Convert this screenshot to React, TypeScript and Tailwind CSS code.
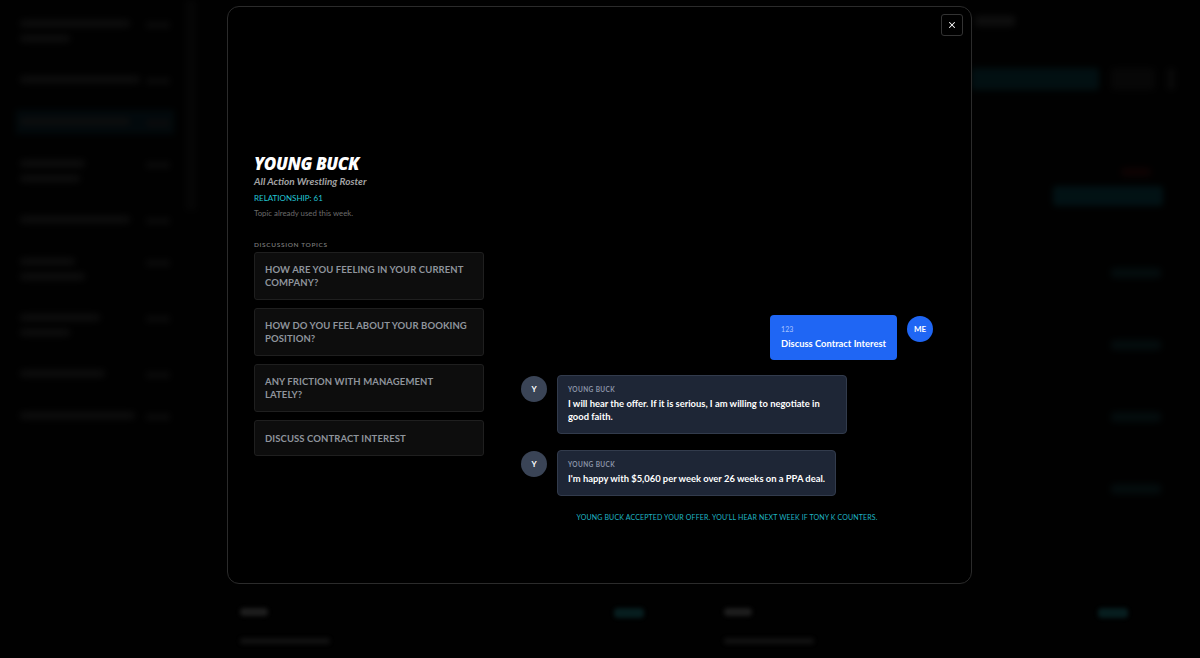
import React from 'react';
import { X } from 'lucide-react';

const SIDEBAR_ROWS = [
  { w: [110, 50], active: false },
  { w: [120], active: false },
  { w: [110], active: true },
  { w: [65, 60], active: false },
  { w: [110], active: false },
  { w: [55, 65], active: false },
  { w: [80, 50], active: false },
  { w: [85], active: false },
  { w: [115], active: false },
];

const TOPICS = [
  'How are you feeling in your current company?',
  'How do you feel about your booking position?',
  'Any friction with management lately?',
  'Discuss contract interest',
];

const Backdrop: React.FC = () => (
  <div className="absolute inset-0 flex blur-[3px] opacity-70">
    {/* sidebar */}
    <div className="w-[186px] shrink-0 flex flex-col pt-3 pl-4 pr-3 gap-[18px]">
      {SIDEBAR_ROWS.map((r, i) => (
        <div
          key={i}
          className={`flex justify-between items-start py-2 px-1 ${r.active ? 'bg-[#061a22]' : ''}`}
        >
          <div className="flex flex-col gap-2">
            {r.w.map((w, j) => (
              <div key={j} className="h-[7px] bg-[#262626] rounded" style={{ width: w }} />
            ))}
          </div>
          <div className="w-6 h-[6px] bg-[#202020] rounded mt-0.5" />
        </div>
      ))}
    </div>
    <div className="w-[10px] bg-[#111] h-[210px]" />
    {/* main */}
    <div className="flex-1 flex flex-col pl-[775px] pr-6 pt-4">
      <div className="h-[10px] w-[40px] bg-[#2a2a2a] rounded ml-1" />
      <div className="flex gap-3 mt-[42px] items-center">
        <div className="h-[22px] w-[128px] bg-[#062d33] rounded" />
        <div className="h-[22px] w-[44px] bg-[#141414] rounded" />
        <div className="h-[22px] w-[8px] bg-[#1a1a1a] rounded" />
      </div>
      <div className="mt-[78px] ml-[150px] h-[8px] w-[30px] bg-[#2a0808] rounded" />
      <div className="mt-[10px] ml-[82px] h-[20px] w-[110px] bg-[#06323a] rounded" />
      {[0, 1, 2, 3].map(i => (
        <div key={i} className="ml-[140px] h-[10px] w-[50px] bg-[#0b2326] rounded mt-[62px]" />
      ))}
    </div>
  </div>
);

const Avatar: React.FC<{ label: string; me?: boolean }> = ({ label, me }) => (
  <div
    className={`w-[26px] h-[26px] rounded-full text-white text-[8px] font-bold flex items-center justify-center mt-[1px] shrink-0 ${me ? 'bg-[#1f66f4]' : 'bg-[#3a4456]'}`}
  >
    {label}
  </div>
);

const App: React.FC = () => {
  return (
    <div className="relative w-[1200px] h-[658px] overflow-hidden bg-[#030303] font-['Lato','Noto_Sans',sans-serif]">
      <Backdrop />
      <div className="absolute inset-0 bg-black/50" />

      {/* bottom cards peeking behind modal */}
      <div className="absolute left-[228px] right-[20px] top-[596px] flex gap-4 blur-[2px] opacity-70">
        {[0, 1].map(i => (
          <div key={i} className="flex-1 px-3 pt-3">
            <div className="flex justify-between">
              <div className="h-[8px] w-[28px] bg-[#2a2a2a] rounded" />
              <div className="h-[10px] w-[30px] bg-[#0a2a2c] rounded mr-10" />
            </div>
            <div className="h-[6px] w-[90px] bg-[#181818] rounded mt-5" />
          </div>
        ))}
      </div>

      {/* modal */}
      <div className="absolute left-[227px] top-[6px] w-[745px] h-[578px] bg-black border border-[#2b2b2b] rounded-xl">
        <button className="absolute right-[8px] top-[7px] w-[22px] h-[22px] flex items-center justify-center border border-[#333] rounded-[3px] text-white">
          <X className="w-[10px] h-[10px]" strokeWidth={2.5} />
        </button>

        <div className="flex h-full pl-[26px] pr-[38px]">
          {/* left column */}
          <div className="w-[230px] shrink-0 pt-[146px]">
            <h1 className="text-white text-[17px] font-extrabold italic leading-[22px] tracking-tight font-['Open_Sans',sans-serif]">YOUNG BUCK</h1>
            <div className="text-[#a3a3a3] text-[10px] font-bold italic leading-[13px]">All Action Wrestling Roster</div>
            <div className="text-[#22c5d5] text-[8px] leading-[11px] mt-[5px]">RELATIONSHIP: 61</div>
            <div className="text-[#6b6b6b] text-[7.8px] leading-[11px] mt-[4px]">Topic already used this week.</div>

            <div className="text-[#7a7a7a] text-[6.5px] font-semibold tracking-[0.1em] leading-[9px] mt-[21px]">DISCUSSION TOPICS</div>
            <div className="flex flex-col gap-[8px] mt-[3px]">
              {TOPICS.map(t => (
                <button
                  key={t}
                  className={`w-full text-left pl-[10px] pr-[14px] bg-[#0d0d0d] border border-[#1f1f1f] rounded-[3px] text-[#8f949c] text-[9.5px] font-bold uppercase tracking-[0.01em] leading-[13px] ${t.length > 30 ? 'h-[48px]' : 'h-[36px]'}`}
                >
                  {t}
                </button>
              ))}
            </div>
          </div>

          {/* chat column */}
          <div className="flex-1 pl-[37px] pt-[308px] flex flex-col">
            <div className="flex justify-end items-start gap-[10px]">
              <div className="bg-[#1f66f4] rounded-[4px] px-[11px] pt-[10px] pb-[10px] whitespace-nowrap">
                <div className="text-[#a9c4ff] text-[7px] leading-[9px]">123</div>
                <div className="text-white text-[9.4px] font-bold leading-[13px] mt-[3px]">Discuss Contract Interest</div>
              </div>
              <Avatar label="ME" me />
            </div>

            <div className="flex items-start gap-[10px] mt-[15px]">
              <Avatar label="Y" />
              <div className="bg-[#1e2636] border border-[#323b4c] rounded-[4px] px-[10px] pt-[9px] pb-[10px] w-[290px]">
                <div className="text-[#8a93a6] text-[6.5px] font-bold tracking-[0.06em] leading-[9px]">YOUNG BUCK</div>
                <div className="text-white text-[9.4px] font-bold leading-[13px] mt-[3px]">I will hear the offer. If it is serious, I am willing to negotiate in good faith.</div>
              </div>
            </div>

            <div className="flex items-start gap-[10px] mt-[16px]">
              <Avatar label="Y" />
              <div className="bg-[#1e2636] border border-[#323b4c] rounded-[4px] px-[10px] pt-[9px] pb-[10px]">
                <div className="text-[#8a93a6] text-[6.5px] font-bold tracking-[0.06em] leading-[9px]">YOUNG BUCK</div>
                <div className="text-white text-[9.4px] font-bold leading-[13px] mt-[3px]">I&apos;m happy with $5,060 per week over 26 weeks on a PPA deal.</div>
              </div>
            </div>

            <div className="text-center text-[#1fb5c4] text-[7px] leading-[10px] tracking-[0.02em] mt-[16px]">
              YOUNG BUCK ACCEPTED YOUR OFFER. YOU&apos;LL HEAR NEXT WEEK IF TONY K COUNTERS.
            </div>
          </div>
        </div>
      </div>
    </div>
  );
};

export default App;
